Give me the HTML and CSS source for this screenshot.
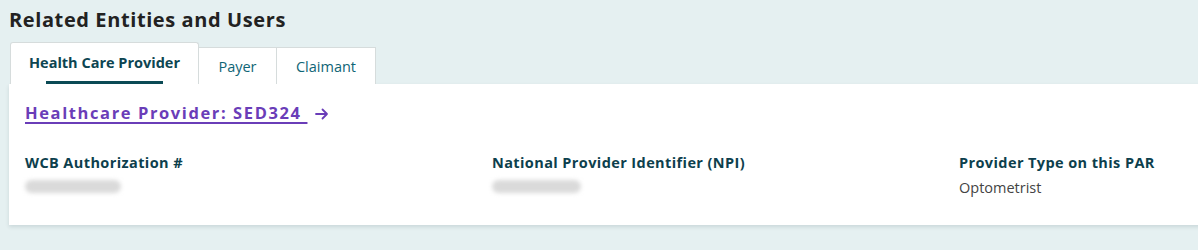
FILE: index.html
```html
<!DOCTYPE html>
<html lang="en">
<head>
<meta charset="utf-8">
<link rel="stylesheet" href="styles.css">
</head>
<body>
<section class="related">
  <h2 class="title">Related Entities and Users</h2>
  <div class="tabs">
    <div class="tab active"><span class="tab-label">Health Care Provider</span></div>
    <div class="tab">Payer</div>
    <div class="tab">Claimant</div>
  </div>
  <div class="card">
    <a class="link" href="#"><span class="link-text">Healthcare Provider: SED324&nbsp;</span><svg class="arrow" width="14" height="12" viewBox="0 0 14 12"><path d="M1 6H12M7.5 1.5L12 6L7.5 10.5" fill="none" stroke="#6a3db8" stroke-width="1.8" stroke-linecap="round" stroke-linejoin="round"/></svg></a>
    <div class="fields">
      <div class="field">
        <div class="label">WCB Authorization #</div>
        <div class="blur blur-a"></div>
      </div>
      <div class="field">
        <div class="label">National Provider Identifier (NPI)</div>
        <div class="blur blur-b"></div>
      </div>
      <div class="field">
        <div class="label">Provider Type on this PAR</div>
        <div class="value">Optometrist</div>
      </div>
    </div>
  </div>
</section>
</body>
</html>
```
FILE: styles.css
```css
html, body {
  margin: 0;
  padding: 0;
  background: #e5f0f1;
  overflow: hidden;
}
body {
  font-family: "Open Sans", "Liberation Sans", sans-serif;
  width: 1198px;
  height: 250px;
}
.related {
  padding: 8px 0 0 9px;
}
.title {
  margin: 0;
  font-size: 20px;
  font-weight: 700;
  color: #222222;
  letter-spacing: 0.6px;
  line-height: 24px;
  height: 34px;
}
.tabs {
  display: flex;
  align-items: flex-end;
  height: 42px;
}
.tab {
  box-sizing: border-box;
  height: 37px;
  background: #ffffff;
  border: 1px solid #d6dcdc;
  border-bottom: none;
  border-left: none;
  padding: 0 18px;
  display: flex;
  align-items: center;
  font-size: 14.5px;
  color: #0f6576;
  font-weight: 500;
}
.tab.active {
  height: 42px;
  border-left: 1px solid #d6dcdc;
  border-top-left-radius: 3px;
  border-top-right-radius: 3px;
  width: 189px;
  justify-content: center;
  padding: 0;
  font-weight: 700;
  color: #0d4552;
  position: relative;
  margin-left: 1px;
}
.tab-label {
  display: inline-block;
  padding-bottom: 3px;
}
.tab.active::after {
  content: "";
  position: absolute;
  left: 35px;
  width: 117px;
  bottom: 0;
  height: 3px;
  background: #0b4a55;
}
.tab:nth-child(2) { width: 78px; justify-content: center; padding: 0; }
.tab:nth-child(3) { width: 99px; justify-content: center; padding: 0; }
.card {
  background: #ffffff;
  box-shadow: 0 2px 4px rgba(0, 40, 50, 0.12);
  height: 141px;
  box-sizing: border-box;
  padding: 18px 0 0 16px;
  margin-right: -20px;
}
.link {
  display: inline-flex;
  align-items: center;
  color: #6a3db8;
  font-weight: 700;
  font-size: 16.5px;
  letter-spacing: 1.6px;
  text-decoration: none;
  line-height: 22px;
}
.link-text {
  text-decoration: underline;
  text-underline-offset: 3px;
  text-decoration-thickness: 1.5px;
}
.arrow {
  margin-left: 8px;
  margin-top: 2px;
}
.fields {
  display: grid;
  grid-template-columns: 467px 467px 1fr;
  margin-top: 29px;
}
.label {
  font-size: 14.5px;
  font-weight: 700;
  color: #0d3f4d;
  letter-spacing: 0.4px;
  line-height: 20px;
}
.value {
  font-size: 14.5px;
  color: #444444;
  line-height: 20px;
  margin-top: 5px;
}
.blur {
  height: 13px;
  margin-top: 7px;
  background: #dadada;
  border-radius: 7px;
  filter: blur(2px);
}
.blur-a { width: 96px; }
.blur-b { width: 89px; }
```
